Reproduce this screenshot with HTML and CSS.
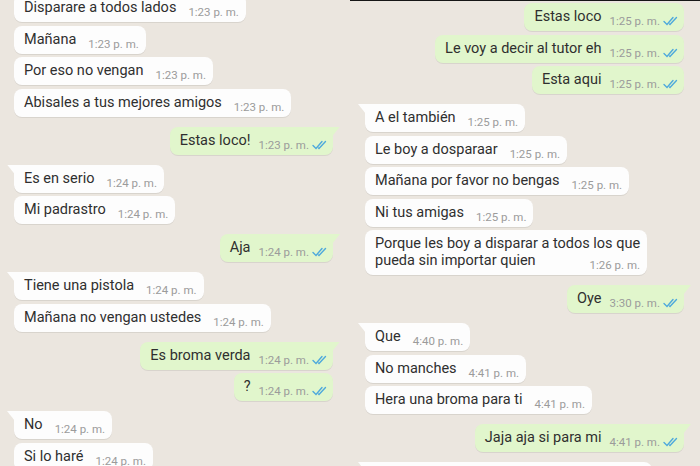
FILE: index.html
```html
<!DOCTYPE html>
<html lang="es">
<head>
  <meta charset="UTF-8" />
  <meta name="viewport" content="width=device-width, initial-scale=1.0" />
  <title>Chat</title>
  <link rel="stylesheet" href="styles.css">
</head>
<body>
  <div class="chats">
    <section class="chat chat-left">
      <div class="messages">
        <div class="msg in"><span class="text">Disparare a todos lados</span><span class="time">1:23 p. m.</span></div>
        <div class="msg in"><span class="text">Mañana</span><span class="time">1:23 p. m.</span></div>
        <div class="msg in"><span class="text">Por eso no vengan</span><span class="time">1:23 p. m.</span></div>
        <div class="msg in"><span class="text">Abisales a tus mejores amigos</span><span class="time">1:23 p. m.</span></div>

        <div class="msg out first"><span class="text">Estas loco!</span><span class="time">1:23 p. m.<svg class="ticks" viewBox="0 0 15 10"><path d="M1 5.5 L4 8.5 L10 1.5 M6.5 8 L7 8.5 L13.5 1.5"/></svg></span></div>

        <div class="msg in first"><span class="text">Es en serio</span><span class="time">1:24 p. m.</span></div>
        <div class="msg in"><span class="text">Mi padrastro</span><span class="time">1:24 p. m.</span></div>

        <div class="msg out first"><span class="text">Aja</span><span class="time">1:24 p. m.<svg class="ticks" viewBox="0 0 15 10"><path d="M1 5.5 L4 8.5 L10 1.5 M6.5 8 L7 8.5 L13.5 1.5"/></svg></span></div>

        <div class="msg in first"><span class="text">Tiene una pistola</span><span class="time">1:24 p. m.</span></div>
        <div class="msg in"><span class="text">Mañana no vengan ustedes</span><span class="time">1:24 p. m.</span></div>

        <div class="msg out first"><span class="text">Es broma verda</span><span class="time">1:24 p. m.<svg class="ticks" viewBox="0 0 15 10"><path d="M1 5.5 L4 8.5 L10 1.5 M6.5 8 L7 8.5 L13.5 1.5"/></svg></span></div>
        <div class="msg out"><span class="text">?</span><span class="time">1:24 p. m.<svg class="ticks" viewBox="0 0 15 10"><path d="M1 5.5 L4 8.5 L10 1.5 M6.5 8 L7 8.5 L13.5 1.5"/></svg></span></div>

        <div class="msg in first"><span class="text">No</span><span class="time">1:24 p. m.</span></div>
        <div class="msg in"><span class="text">Si lo haré</span><span class="time">1:24 p. m.</span></div>
      </div>
    </section>

    <section class="chat chat-right">
      <div class="messages">
        <div class="msg out"><span class="text">Estas loco</span><span class="time">1:25 p. m.<svg class="ticks" viewBox="0 0 15 10"><path d="M1 5.5 L4 8.5 L10 1.5 M6.5 8 L7 8.5 L13.5 1.5"/></svg></span></div>
        <div class="msg out"><span class="text">Le voy a decir al tutor eh</span><span class="time">1:25 p. m.<svg class="ticks" viewBox="0 0 15 10"><path d="M1 5.5 L4 8.5 L10 1.5 M6.5 8 L7 8.5 L13.5 1.5"/></svg></span></div>
        <div class="msg out"><span class="text">Esta aqui</span><span class="time">1:25 p. m.<svg class="ticks" viewBox="0 0 15 10"><path d="M1 5.5 L4 8.5 L10 1.5 M6.5 8 L7 8.5 L13.5 1.5"/></svg></span></div>

        <div class="msg in first"><span class="text">A el también</span><span class="time">1:25 p. m.</span></div>
        <div class="msg in"><span class="text">Le boy a dosparaar</span><span class="time">1:25 p. m.</span></div>
        <div class="msg in"><span class="text">Mañana por favor no bengas</span><span class="time">1:25 p. m.</span></div>
        <div class="msg in"><span class="text">Ni tus amigas</span><span class="time">1:25 p. m.</span></div>
        <div class="msg in multi"><span class="text">Porque les boy a disparar a todos los que<br>pueda sin importar quien</span><span class="time">1:26 p. m.</span></div>

        <div class="msg out first"><span class="text">Oye</span><span class="time">3:30 p. m.<svg class="ticks" viewBox="0 0 15 10"><path d="M1 5.5 L4 8.5 L10 1.5 M6.5 8 L7 8.5 L13.5 1.5"/></svg></span></div>

        <div class="msg in first"><span class="text">Que</span><span class="time">4:40 p. m.</span></div>
        <div class="msg in"><span class="text">No manches</span><span class="time">4:41 p. m.</span></div>
        <div class="msg in"><span class="text">Hera una broma para ti</span><span class="time">4:41 p. m.</span></div>

        <div class="msg out first"><span class="text">Jaja aja si para mi</span><span class="time">4:41 p. m.<svg class="ticks" viewBox="0 0 15 10"><path d="M1 5.5 L4 8.5 L10 1.5 M6.5 8 L7 8.5 L13.5 1.5"/></svg></span></div>

        <div class="msg in first msg-cut"></div>
      </div>
    </section>
  </div>
</body>
</html>
```

FILE: styles.css
```css
body {
  margin: 0;
  padding: 0;
  background: #ebe6df;
  font-family: Roboto, "Liberation Sans", Arial, sans-serif;
  color: #2f2f2f;
}

.chats {
  display: flex;
  width: 700px;
  height: 466px;
  overflow: hidden;
}

.chat {
  width: 350px;
  height: 466px;
  overflow: hidden;
  box-sizing: border-box;
}

.chat-left {
  padding: 0 17px 0 14px;
}

.chat-right {
  padding: 2px 16px 0 15px;
  border-top: 1px solid #161616;
}

.messages {
  display: flex;
  flex-direction: column;
  gap: 3.5px;
}

.chat-left .messages {
  margin-top: -6px;
}

/* Bubbles */
.msg {
  position: relative;
  display: flex;
  align-items: flex-end;
  padding: 5px 7px 3px 10px;
  border-radius: 8px;
  box-shadow: 0 1px 0.5px rgba(0, 0, 0, 0.08);
  max-width: 90%;
  box-sizing: border-box;
}

.msg.in {
  align-self: flex-start;
  background: #fdfdfd;
}

.msg.out {
  align-self: flex-end;
  background: #e1f6cc;
  padding-right: 6px;
}

.msg.first {
  margin-top: 6.5px;
}

.msg.in.first {
  border-top-left-radius: 0;
}

.msg.out.first {
  border-top-right-radius: 0;
}

.msg.first::before {
  content: "";
  position: absolute;
  top: 0;
  width: 8px;
  height: 10px;
  background: inherit;
}

.msg.in.first::before {
  left: -7px;
  clip-path: polygon(0 0, 100% 0, 100% 100%);
}

.msg.out.first::before {
  right: -7px;
  clip-path: polygon(0 0, 100% 0, 0 100%);
}

.msg-cut {
  width: 290px;
  height: 28px;
}

.msg .text {
  font-size: 14.5px;
  line-height: 18px;
  padding-bottom: 2px;
  white-space: nowrap;
}

.msg .time {
  display: flex;
  align-items: center;
  margin-left: 12px;
  font-size: 11.5px;
  line-height: 14px;
  color: #9b9b9b;
  white-space: nowrap;
}

.msg.out .time {
  margin-left: 8px;
}

.msg.multi {
  flex-direction: column;
  align-items: stretch;
}

.msg.multi .text {
  line-height: 17px;
}

.msg.multi .time {
  align-self: flex-end;
  margin-top: -13px;
}

.ticks {
  width: 15px;
  height: 10px;
  margin-left: 3px;
  fill: none;
  stroke: #4ea9dc;
  stroke-width: 1.4;
  stroke-linecap: round;
}
```
